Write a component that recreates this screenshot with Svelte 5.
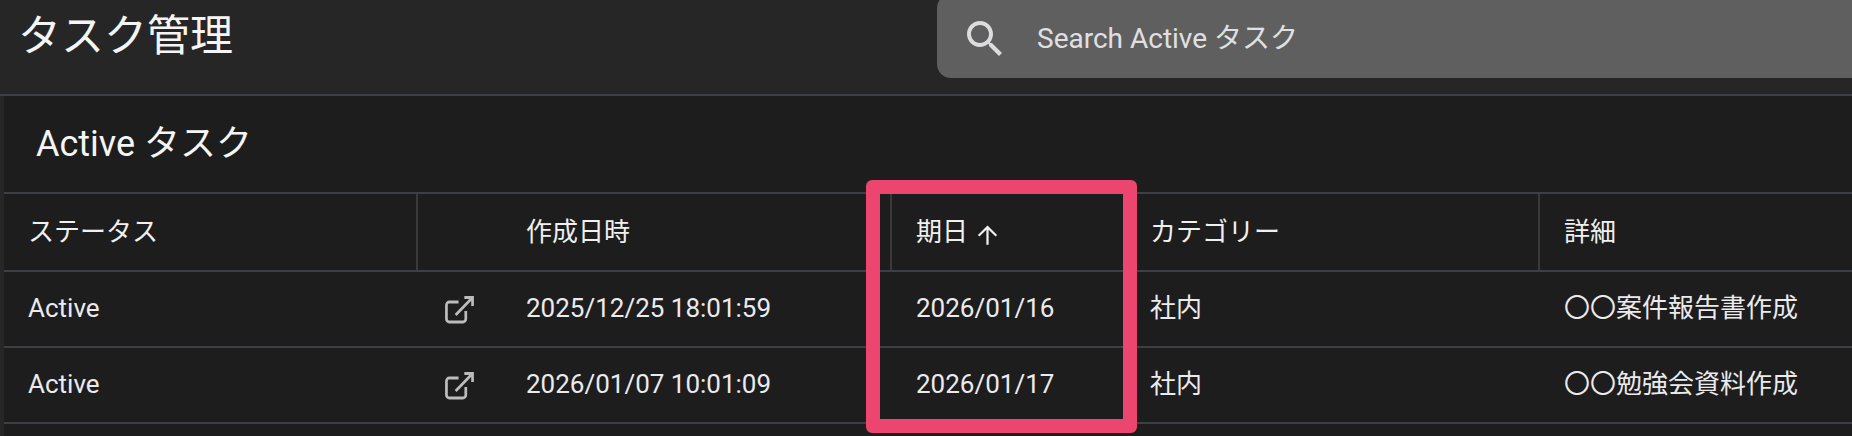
<script lang="ts">
type Task = {
	status: string;
	created: string;
	due: string;
	category: string;
	detail: string;
};

const tasks: Task[] = [
	{ status: 'Active', created: '2025/12/25 18:01:59', due: '2026/01/16', category: '社内', detail: '〇〇案件報告書作成' },
	{ status: 'Active', created: '2026/01/07 10:01:09', due: '2026/01/17', category: '社内', detail: '〇〇勉強会資料作成' }
];
</script>

<div class="page">
	<header class="topbar">
		<h1 class="topbar__title">タスク管理</h1>
		<div class="search">
			<svg class="search__icon" viewBox="0 0 24 24" aria-hidden="true">
				<path d="M15.5 14h-.79l-.28-.27C15.41 12.59 16 11.11 16 9.5 16 5.91 13.09 3 9.5 3S3 5.91 3 9.5 5.91 16 9.5 16c1.61 0 3.09-.59 4.23-1.57l.27.28v.79l5 4.99L20.49 19l-4.99-5zm-6 0C7.01 14 5 11.99 5 9.5S7.01 5 9.5 5 14 7.01 14 9.5 11.99 14 9.5 14z" />
			</svg>
			<span class="search__placeholder">Search Active タスク</span>
		</div>
	</header>

	<main class="panel">
		<h2 class="panel__title">Active タスク</h2>
		<table class="tasks">
			<colgroup>
				<col class="col-status" />
				<col class="col-created" />
				<col class="col-due" />
				<col class="col-category" />
				<col />
			</colgroup>
			<thead>
				<tr>
					<th>ステータス</th>
					<th class="created-head">作成日時</th>
					<th class="due-head">
						<span class="sort">
							期日
							<svg class="sort__icon" viewBox="0 0 24 24" aria-hidden="true">
								<path d="M3.500 12.500l1.300 1.300L11 7.800V21h2V7.800l6.200 6 1.300-1.300L12 4z" />
							</svg>
						</span>
					</th>
					<th>カテゴリー</th>
					<th class="last">詳細</th>
				</tr>
			</thead>
			<tbody>
				{#each tasks as task (task.created)}
					<tr>
						<td>{task.status}</td>
						<td>
							<span class="created">
								<svg class="open-icon" viewBox="0 0 30 28" preserveAspectRatio="none" aria-hidden="true">
									<path d="M14 6H4.500A3 3 0 0 0 1.500 9V23A3 3 0 0 0 4.500 26H18.500A3 3 0 0 0 21.500 23V15" />
									<path d="M11 19L28 2M20 1.500H28.500V10" />
								</svg>
								{task.created}
							</span>
						</td>
						<td class="due">{task.due}</td>
						<td>{task.category}</td>
						<td class="detail">{task.detail}</td>
					</tr>
				{/each}
			</tbody>
		</table>
	</main>

	<div class="highlight"></div>
</div>

<style>
	:global(body) {
		margin: 0;
		background: #1d1d1d;
	}

	.page {
		position: relative;
		height: 436px;
		overflow: hidden;
		background: #262626;
		color: #f0f0f0;
		font-family: Roboto, 'Noto Sans CJK JP', sans-serif;
		font-size: 26px;
	}

	.topbar {
		display: flex;
		align-items: flex-start;
		height: 94px;
		padding-left: 18px;
		border-bottom: 2px solid #3c3f43;
	}

	.topbar__title {
		flex: 0 0 919px;
		margin: 0;
		padding-top: 9px;
		color: #f5f5f5;
		font-size: 43px;
		font-weight: 400;
		line-height: 54px;
	}

	.search {
		display: flex;
		flex: 1;
		align-items: center;
		height: 84px;
		margin-top: -6px;
		padding-left: 24px;
		border-radius: 14px 0 0 14px;
		background: #5f5f5f;
		color: #e0e0e3;
	}

	.search__icon {
		width: 48px;
		height: 48px;
		margin-top: 6px;
		fill: #dcdcdf;
	}

	.search__placeholder {
		margin-top: 6px;
		margin-left: 28px;
		font-size: 28px;
		line-height: 40px;
	}

	.panel {
		height: 340px;
		margin-left: 4px;
		background: #1d1d1d;
	}

	.panel__title {
		height: 98px;
		box-sizing: border-box;
		margin: 0;
		padding-left: 32px;
		color: #f5f5f5;
		font-size: 36px;
		font-weight: 400;
		line-height: 96px;
		border-bottom: 2px solid #3c3f43;
	}

	.tasks {
		width: 100%;
		table-layout: fixed;
		border-collapse: separate;
		border-spacing: 0;
	}

	.col-status {
		width: 414px;
	}

	.col-created {
		width: 474px;
	}

	.col-due {
		width: 234px;
	}

	.col-category {
		width: 414px;
	}

	th,
	td {
		box-sizing: border-box;
		height: 76px;
		padding: 0 0 0 24px;
		border-bottom: 2px solid #3c3f43;
		font-weight: 400;
		line-height: 38px;
		text-align: left;
		white-space: nowrap;
	}

	td {
		padding-bottom: 2px;
		color: #ebebee;
	}

	th {
		height: 78px;
		border-right: 2px solid #3a3a3a;
		background-clip: padding-box;
		color: #f0f0f0;
	}

	th.last {
		border-right: 0;
	}

	th.created-head {
		padding-left: 108px;
	}

	.sort {
		display: flex;
		align-items: center;
	}

	.sort__icon {
		width: 27px;
		height: 27px;
		margin-top: 4px;
		margin-left: 6px;
		fill: #f0f0f0;
	}

	.created {
		display: flex;
		align-items: center;
	}

	.open-icon {
		width: 29px;
		height: 28px;
		margin-top: 3px;
		margin-right: 52px;
		margin-left: 3px;
		fill: none;
		stroke: #bcbcbe;
		stroke-width: 2.8;
	}

	.highlight {
		position: absolute;
		top: 180px;
		left: 866px;
		box-sizing: border-box;
		width: 271px;
		height: 253px;
		border: 14px solid #ec456f;
		border-radius: 6px;
		pointer-events: none;
	}
</style>
